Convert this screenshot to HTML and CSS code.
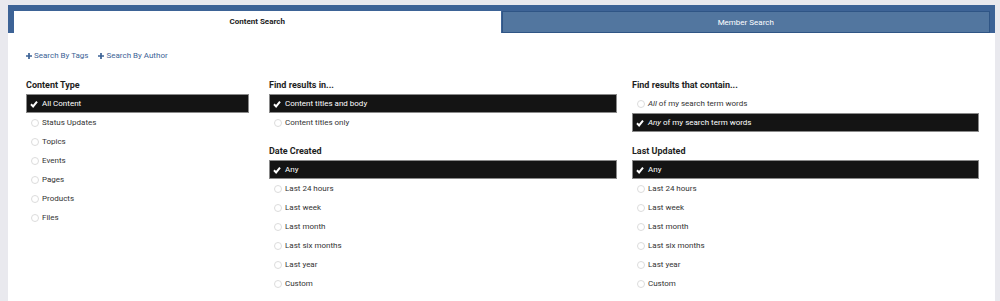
FILE: index.html
```html
<!DOCTYPE html>
<html lang="en">
<head>
    <meta charset="UTF-8">
    <title>Search</title>
    <link rel="stylesheet" href="styles.css">
</head>
<body>

    <div class="search-panel">
        <!-- Tabs -->
        <div class="tabs">
            <div class="tab tab-active">Content Search</div>
            <div class="tab">Member Search</div>
        </div>

        <div class="panel-body">
            <div class="filter-links">
                <a href="#"><svg class="plus" viewBox="0 0 7 7"><path d="M3.5 0v7M0 3.5h7"/></svg>Search By Tags</a>
                <a href="#"><svg class="plus" viewBox="0 0 7 7"><path d="M3.5 0v7M0 3.5h7"/></svg>Search By Author</a>
            </div>

            <div class="filter-columns">
                <!-- Cột 1 -->
                <div class="filter-col col-type">
                    <div class="filter-group">
                        <h3>Content Type</h3>
                        <ul class="options">
                            <li class="selected"><svg class="check" viewBox="0 0 8 8"><path d="M1 4.3l2.1 2.1L7 1.6"/></svg>All Content</li>
                            <li><span class="radio"></span>Status Updates</li>
                            <li><span class="radio"></span>Topics</li>
                            <li><span class="radio"></span>Events</li>
                            <li><span class="radio"></span>Pages</li>
                            <li><span class="radio"></span>Products</li>
                            <li><span class="radio"></span>Files</li>
                        </ul>
                    </div>
                </div>

                <!-- Cột 2 -->
                <div class="filter-col col-find">
                    <div class="filter-group">
                        <h3>Find results in...</h3>
                        <ul class="options">
                            <li class="selected"><svg class="check" viewBox="0 0 8 8"><path d="M1 4.3l2.1 2.1L7 1.6"/></svg>Content titles and body</li>
                            <li><span class="radio"></span>Content titles only</li>
                        </ul>
                    </div>
                    <div class="filter-group">
                        <h3>Date Created</h3>
                        <ul class="options">
                            <li class="selected"><svg class="check" viewBox="0 0 8 8"><path d="M1 4.3l2.1 2.1L7 1.6"/></svg>Any</li>
                            <li><span class="radio"></span>Last 24 hours</li>
                            <li><span class="radio"></span>Last week</li>
                            <li><span class="radio"></span>Last month</li>
                            <li><span class="radio"></span>Last six months</li>
                            <li><span class="radio"></span>Last year</li>
                            <li><span class="radio"></span>Custom</li>
                        </ul>
                    </div>
                </div>

                <!-- Cột 3 -->
                <div class="filter-col col-contain">
                    <div class="filter-group">
                        <h3>Find results that contain...</h3>
                        <ul class="options">
                            <li><span class="radio"></span><em>All</em>&nbsp;of my search term words</li>
                            <li class="selected"><svg class="check" viewBox="0 0 8 8"><path d="M1 4.3l2.1 2.1L7 1.6"/></svg><em>Any</em>&nbsp;of my search term words</li>
                        </ul>
                    </div>
                    <div class="filter-group">
                        <h3>Last Updated</h3>
                        <ul class="options">
                            <li class="selected"><svg class="check" viewBox="0 0 8 8"><path d="M1 4.3l2.1 2.1L7 1.6"/></svg>Any</li>
                            <li><span class="radio"></span>Last 24 hours</li>
                            <li><span class="radio"></span>Last week</li>
                            <li><span class="radio"></span>Last month</li>
                            <li><span class="radio"></span>Last six months</li>
                            <li><span class="radio"></span>Last year</li>
                            <li><span class="radio"></span>Custom</li>
                        </ul>
                    </div>
                </div>
            </div>
        </div>
    </div>

</body>
</html>
```

FILE: styles.css
```css
body {
    margin: 0;
    padding: 5px 5px 0 8px;
    height: 301px;
    box-sizing: border-box;
    overflow: hidden;
    background-color: #e9e9ee;
    font-family: Roboto, "Liberation Sans", sans-serif;
}

.search-panel {
    background-color: #fff;
    height: 100%;
}

/* Tabs */
.tabs {
    display: flex;
    gap: 1px;
    padding: 6px 5px 0 6px;
    background-color: #3d6396;
}

.tab {
    flex: 1;
    height: 22px;
    line-height: 22px;
    text-align: center;
    font-size: 8px;
    color: #fff;
    background-color: #52769f;
    border: 1px solid #2f5585;
    box-sizing: border-box;
}

.tab-active {
    background-color: #fff;
    color: #222;
    font-weight: bold;
    border: none;
}

.panel-body {
    padding: 17px 16px 0 18px;
}

.filter-links {
    display: flex;
    gap: 10px;
}

.filter-links a {
    display: flex;
    align-items: center;
    gap: 2px;
    font-size: 8px;
    line-height: 12px;
    color: #3d6396;
    text-decoration: none;
}

.plus {
    width: 6px;
    height: 6px;
    stroke: #3d6396;
    stroke-width: 2;
}

.filter-columns {
    display: flex;
    margin-top: 15px;
}

.col-type {
    width: 223px;
    margin-right: 20px;
}

.col-find {
    width: 348px;
    margin-right: 15px;
}

.col-contain {
    width: 347px;
}

.filter-group + .filter-group {
    margin-top: 11px;
}

.filter-group h3 {
    margin: 0 0 1px;
    font-size: 9px;
    line-height: 16px;
    color: #1e1e1e;
}

.options {
    list-style: none;
    margin: 0;
    padding: 0;
}

.options li {
    display: flex;
    align-items: center;
    height: 19px;
    padding-left: 4px;
    box-sizing: border-box;
    font-size: 8px;
    color: #333;
}

.options li.selected {
    background-color: #141414;
    border: 1px solid #8a8a8a;
    padding-left: 3px;
    color: #fff;
}

.radio {
    width: 6px;
    height: 6px;
    margin: 0 3px 0 1px;
    border: 1px solid #dcdcdc;
    border-radius: 50%;
}

.check {
    width: 8px;
    height: 8px;
    margin-right: 4px;
    fill: none;
    stroke: #fff;
    stroke-width: 2;
}
```
